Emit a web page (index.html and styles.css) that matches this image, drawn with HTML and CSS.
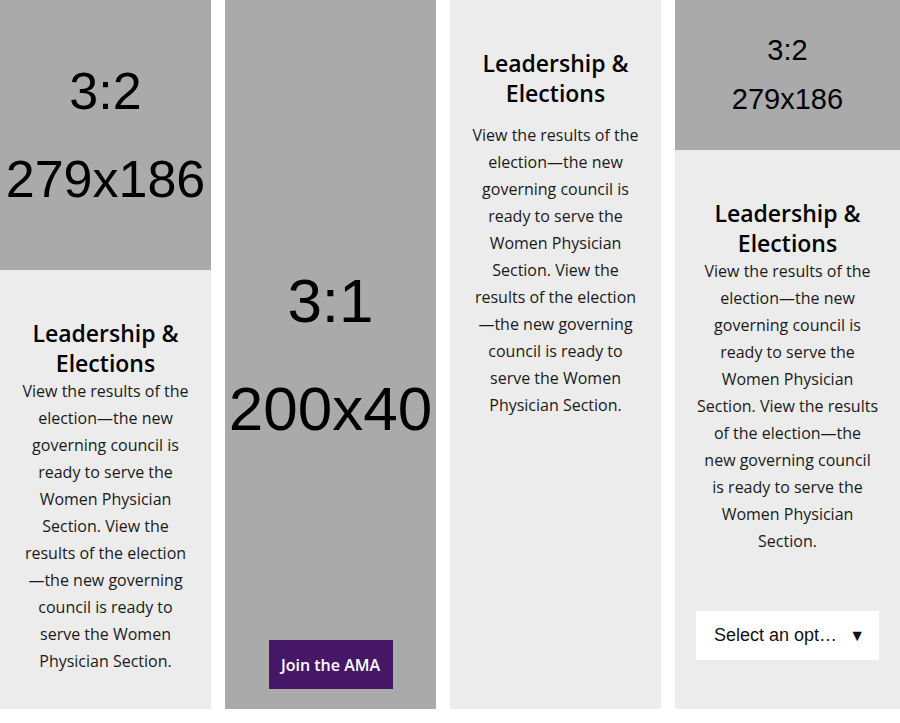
FILE: index.html
```html
<!DOCTYPE html>
<html lang="en">
<head>
<meta charset="utf-8">
<title>Cards</title>
<link rel="stylesheet" href="styles.css">
</head>
<body>
<div class="row">
  <div class="card card-a">
    <div class="ph ph-lg"><span>3:2</span><span>279x186</span></div>
    <div class="body">
      <h3 class="title">Leadership &amp; Elections</h3>
      <p class="text">View the results of the election—the new governing council is ready to serve the Women Physician Section. View the results of the election—the new governing council is ready to serve the Women Physician Section.</p>
    </div>
  </div>
  <div class="card card-b">
    <div class="ph ph-xl"><span>3:1</span><span>200x40</span></div>
    <a class="btn" href="#">Join the AMA</a>
  </div>
  <div class="card card-c">
    <div class="body">
      <h3 class="title spaced">Leadership &amp; Elections</h3>
      <p class="text">View the results of the election—the new governing council is ready to serve the Women Physician Section. View the results of the election—the new governing council is ready to serve the Women Physician Section.</p>
    </div>
  </div>
  <div class="card card-d">
    <div class="ph ph-sm"><span>3:2</span><span>279x186</span></div>
    <div class="body body-wide">
      <h3 class="title">Leadership &amp; Elections</h3>
      <p class="text">View the results of the election—the new governing council is ready to serve the Women Physician Section. View the results of the election—the new governing council is ready to serve the Women Physician Section.</p>
      <div class="select"><span class="select-label">Select an opt…</span><span class="select-arrow">▼</span></div>
    </div>
  </div>
</div>
</body>
</html>
```
FILE: styles.css
```css
* { box-sizing: border-box; }
html, body { margin: 0; padding: 0; background: #fff; }
body { font-family: "Open Sans", "Liberation Sans", sans-serif; color: #1a1a1a; }

.row {
  display: flex;
  gap: 14px;
  height: 709px;
}
.card {
  width: 211px;
  flex: 0 0 auto;
  background: #ececec;
  display: flex;
  flex-direction: column;
}
.card-d { width: 225px; }

.ph {
  background: #aaaaaa;
  display: flex;
  flex-direction: column;
  align-items: center;
  justify-content: center;
  font-family: "Liberation Sans", Arial, sans-serif;
  color: #000;
  overflow: hidden;
  white-space: nowrap;
}
.ph-lg { height: 270px; font-size: 52px; line-height: 88px; }
.ph-sm { height: 150px; font-size: 29px; line-height: 49px; }
.ph-xl { height: 709px; font-size: 62px; line-height: 108px; }

.card-b {
  display: grid;
  background: #aaaaaa;
}
.card-b > * { grid-area: 1 / 1; }
.btn {
  align-self: end;
  justify-self: center;
  margin-bottom: 20px;
  width: 124px;
  height: 49px;
  background: #461766;
  color: #fff;
  font-weight: 600;
  font-size: 16px;
  text-decoration: none;
  display: flex;
  align-items: center;
  justify-content: center;
}

.body {
  padding: 48px 20px 0;
  text-align: center;
}
.body-wide { padding: 48px 21.5px 0; }
.title {
  margin: 0;
  font-size: 23px;
  line-height: 30px;
  font-weight: 600;
  color: #000;
}
.title.spaced { margin-bottom: 14px; }
.text {
  margin: 0;
  font-size: 16px;
  line-height: 27px;
}

.select {
  margin: 56px -0.5px 0;
  height: 49px;
  background: #fff;
  display: flex;
  align-items: center;
  justify-content: space-between;
  padding: 0 14px 0 18px;
  font-family: "Liberation Sans", Arial, sans-serif;
  font-size: 18px;
  color: #111;
  text-align: left;
}
.select-arrow { font-size: 16px; }
```
